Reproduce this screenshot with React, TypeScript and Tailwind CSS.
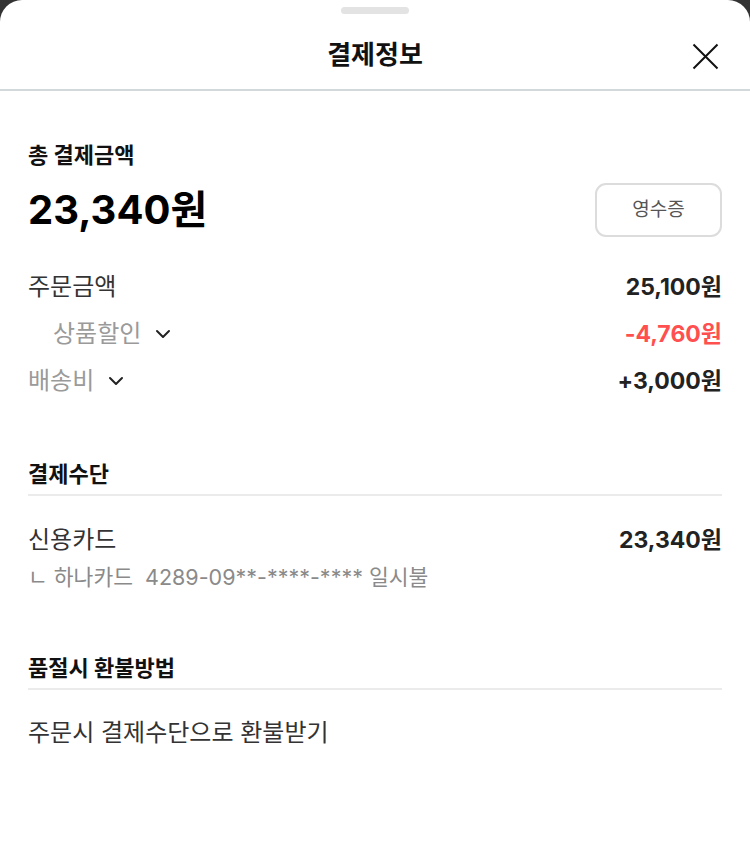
import { FC } from "react";

const Chevron: FC = () => (
  <svg width="16" height="10" viewBox="0 0 16 10" fill="none" className="ml-[14px]">
    <path d="M2 2l6 6 6-6" stroke="#222" strokeWidth="2" strokeLinecap="round" strokeLinejoin="round" />
  </svg>
);

const SectionTitle: FC<{ title: string }> = ({ title }) => (
  <div className="border-b-2 border-[#ebebeb] pb-[5px]">
    <h3 className="text-[22px] leading-[30px] font-bold text-[#111]">{title}</h3>
  </div>
);

const App: FC = () => {
  return (
    <div
      className="min-h-[852px] bg-[#333333]"
      style={{ fontFamily: 'Inter, "Noto Sans CJK KR", sans-serif' }}
    >
      <div className="bg-white rounded-t-[22px] min-h-[852px]">
        <div className="flex justify-center pt-[7px] h-[20px]">
          <div className="w-[68px] h-[7px] rounded-full bg-[#e3e3e3]" />
        </div>

        <div className="relative flex items-center justify-center h-[71px] border-b-2 border-[#d3d8db]">
          <h2 className="text-[26px] font-bold text-[#111]">결제정보</h2>
          <button className="absolute right-[31px] top-[23px] p-0">
            <svg width="27" height="27" viewBox="0 0 27 27" fill="none">
              <path d="M1.5 1.5 25.5 25.5M25.5 1.5 1.5 25.5" stroke="#111" strokeWidth="2" />
            </svg>
          </button>
        </div>

        <div className="px-[28px] pt-[49px]">
          <p className="text-[22px] leading-[30px] font-bold text-[#111]">총 결제금액</p>
          <div className="flex items-center justify-between mt-[13px]">
            <p className="text-[40px] font-bold text-black leading-none">23,340원</p>
            <button className="w-[127px] h-[54px] rounded-[11px] border-2 border-[#dcdcdc] text-[19px] text-[#555]">
              영수증
            </button>
          </div>

          <div className="mt-[35px] flex flex-col gap-[17px] text-[23px] leading-[30px]">
            <div className="flex justify-between items-center">
              <span className="text-[24px] text-[#333]">주문금액</span>
              <span className="font-bold text-[#222]">25,100원</span>
            </div>
            <div className="flex justify-between items-center">
              <span className="flex items-center pl-[25px] text-[24px] text-[#9a9a9a]">
                상품할인
                <Chevron />
              </span>
              <span className="font-bold text-[#ff4f4f]">-4,760원</span>
            </div>
            <div className="flex justify-between items-center">
              <span className="flex items-center text-[24px] text-[#9a9a9a]">
                배송비
                <Chevron />
              </span>
              <span className="font-bold text-[#222]">+3,000원</span>
            </div>
          </div>

          <div className="mt-[63px]">
            <SectionTitle title="결제수단" />
            <div className="flex justify-between items-center mt-[29px] text-[23px] leading-[30px]">
              <span className="text-[24px] text-[#333]">신용카드</span>
              <span className="font-bold text-[#222]">23,340원</span>
            </div>
            <p className="mt-[9px] text-[21.5px] leading-[26px] text-[#8a8a8a]">
              ㄴ 하나카드&nbsp;&nbsp;4289-09**-****-**** 일시불
            </p>
          </div>

          <div className="mt-[63px]">
            <SectionTitle title="품절시 환불방법" />
            <p className="mt-[28px] text-[24px] leading-[30px] text-[#333]">주문시 결제수단으로 환불받기</p>
          </div>
        </div>
      </div>
    </div>
  );
};

export default App;
